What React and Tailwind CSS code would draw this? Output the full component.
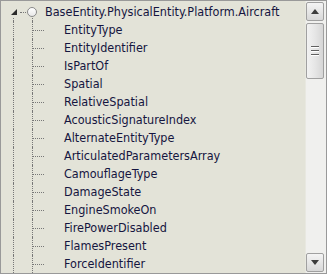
import React from 'react';

const children = [
  'EntityType',
  'EntityIdentifier',
  'IsPartOf',
  'Spatial',
  'RelativeSpatial',
  'AcousticSignatureIndex',
  'AlternateEntityType',
  'ArticulatedParametersArray',
  'CamouflageType',
  'DamageState',
  'EngineSmokeOn',
  'FirePowerDisabled',
  'FlamesPresent',
  'ForceIdentifier',
];

const font = { fontFamily: '"DejaVu Sans Condensed", "DejaVu Sans", sans-serif' };

function ArrowButton({ up }) {
  return (
    <div className="h-[19px] w-full flex items-center justify-center border border-[#a0a0a0] rounded-[2px] bg-gradient-to-b from-[#f4f4f4] to-[#d8d8d8]">
      <svg width="8" height="5" viewBox="0 0 8 5">
        {up ? <path d="M0 5 L4 0 L8 5 Z" fill="#3c3c3c" /> : <path d="M0 0 L8 0 L4 5 Z" fill="#3c3c3c" />}
      </svg>
    </div>
  );
}

export default function App() {
  return (
    <div className="w-[327px] h-[274px] border border-[#999999] bg-[#e3e3d8] flex overflow-hidden select-none" style={font}>
      <div className="flex-1 pt-[2px] overflow-hidden text-[12.5px] text-[#151540]">
        {/* root node */}
        <div className="h-[18px] flex items-center">
          <div className="w-[19px] ml-[9px] h-full relative flex items-center">
            <svg width="6" height="6" viewBox="0 0 6 6" className="ml-[1px]">
              <path d="M6 0 L6 6 L0 6 Z" fill="#2a2a2a" />
            </svg>
            <div className="ml-[3px] w-[6px] border-t border-dotted border-[#777]" />
            <div className="absolute left-[3px] top-[15px] bottom-0 border-l border-dotted border-[#777]" />
          </div>
          <div className="w-[16px] h-full relative flex items-center">
            <div className="w-[10px] h-[10px] -ml-[2px] rounded-full border border-[#8a8a8a] bg-gradient-to-b from-white to-[#e8e8e8]" />
            <div className="absolute left-[3px] top-[15px] bottom-0 border-l border-dotted border-[#777]" />
          </div>
          <span className="whitespace-nowrap">BaseEntity.PhysicalEntity.Platform.Aircraft</span>
        </div>
        {children.map((name) => (
          <div key={name} className="h-[18px] flex items-center">
            <div className="w-[19px] ml-[12px] h-full border-l border-dotted border-[#777]" />
            <div className="w-[32px] h-full border-l border-dotted border-[#777] flex items-center">
              <div className="w-[11px] border-t border-dotted border-[#777]" />
            </div>
            <span className="whitespace-nowrap">{name}</span>
          </div>
        ))}
        <div className="h-[18px] flex">
          <div className="w-[19px] ml-[12px] h-full border-l border-dotted border-[#777]" />
          <div className="w-[32px] h-full border-l border-dotted border-[#777]" />
        </div>
      </div>
      <div className="w-[21px] h-full bg-[#f0f0ee] border-l border-[#e8e8e0] flex flex-col py-[1px] pr-[2px]">
        <ArrowButton up />
        <div className="flex-1 pt-[2px] flex flex-col">
          <div className="h-[56px] border border-[#a0a0a0] rounded-[2px] bg-gradient-to-r from-[#f2f2f2] via-[#e6e6e6] to-[#d6d6d6] flex flex-col items-center justify-center gap-[2px]">
            <div className="w-[8px] h-[2px] border-t border-b border-t-[#606060] border-b-[#ffffff]" />
            <div className="w-[8px] h-[2px] border-t border-b border-t-[#606060] border-b-[#ffffff]" />
            <div className="w-[8px] h-[2px] border-t border-b border-t-[#606060] border-b-[#ffffff]" />
          </div>
        </div>
        <ArrowButton />
      </div>
    </div>
  );
}
